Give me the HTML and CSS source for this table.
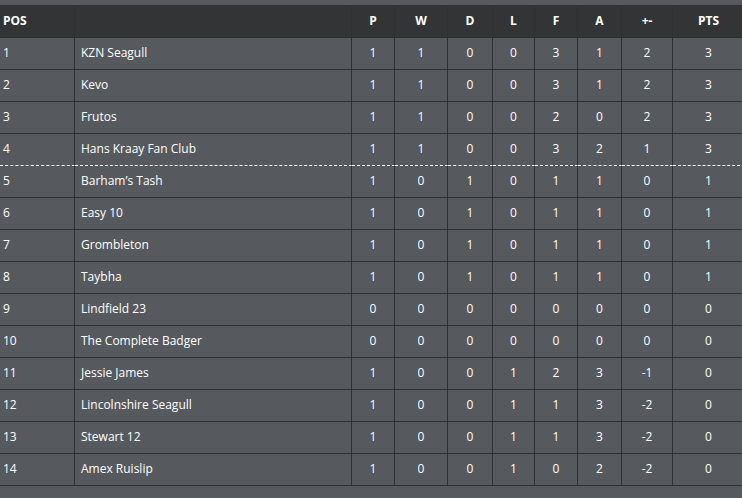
FILE: index.html
```html
<!DOCTYPE html>
<html>
<head>
<meta charset="utf-8">
<link rel="stylesheet" href="styles.css">
</head>
<body>
<table class="league">
  <colgroup>
    <col class="c-pos"><col class="c-team"><col class="c-p"><col class="c-w"><col class="c-d"><col class="c-l"><col class="c-f"><col class="c-a"><col class="c-gd"><col class="c-pts">
  </colgroup>
  <thead>
    <tr><th class="left">POS</th><th></th><th>P</th><th>W</th><th>D</th><th>L</th><th>F</th><th>A</th><th>+-</th><th>PTS</th></tr>
  </thead>
  <tbody>
    <tr><td class="pos">1</td><td class="team">KZN Seagull</td><td>1</td><td>1</td><td>0</td><td>0</td><td>3</td><td>1</td><td>2</td><td>3</td></tr>
    <tr><td class="pos">2</td><td class="team">Kevo</td><td>1</td><td>1</td><td>0</td><td>0</td><td>3</td><td>1</td><td>2</td><td>3</td></tr>
    <tr><td class="pos">3</td><td class="team">Frutos</td><td>1</td><td>1</td><td>0</td><td>0</td><td>2</td><td>0</td><td>2</td><td>3</td></tr>
    <tr class="cutoff"><td class="pos">4</td><td class="team">Hans Kraay Fan Club</td><td>1</td><td>1</td><td>0</td><td>0</td><td>3</td><td>2</td><td>1</td><td>3</td></tr>
    <tr><td class="pos">5</td><td class="team">Barham’s Tash</td><td>1</td><td>0</td><td>1</td><td>0</td><td>1</td><td>1</td><td>0</td><td>1</td></tr>
    <tr><td class="pos">6</td><td class="team">Easy 10</td><td>1</td><td>0</td><td>1</td><td>0</td><td>1</td><td>1</td><td>0</td><td>1</td></tr>
    <tr><td class="pos">7</td><td class="team">Grombleton</td><td>1</td><td>0</td><td>1</td><td>0</td><td>1</td><td>1</td><td>0</td><td>1</td></tr>
    <tr><td class="pos">8</td><td class="team">Taybha</td><td>1</td><td>0</td><td>1</td><td>0</td><td>1</td><td>1</td><td>0</td><td>1</td></tr>
    <tr><td class="pos">9</td><td class="team">Lindfield 23</td><td>0</td><td>0</td><td>0</td><td>0</td><td>0</td><td>0</td><td>0</td><td>0</td></tr>
    <tr><td class="pos">10</td><td class="team">The Complete Badger</td><td>0</td><td>0</td><td>0</td><td>0</td><td>0</td><td>0</td><td>0</td><td>0</td></tr>
    <tr><td class="pos">11</td><td class="team">Jessie James</td><td>1</td><td>0</td><td>0</td><td>1</td><td>2</td><td>3</td><td>-1</td><td>0</td></tr>
    <tr><td class="pos">12</td><td class="team">Lincolnshire Seagull</td><td>1</td><td>0</td><td>0</td><td>1</td><td>1</td><td>3</td><td>-2</td><td>0</td></tr>
    <tr><td class="pos">13</td><td class="team">Stewart 12</td><td>1</td><td>0</td><td>0</td><td>1</td><td>1</td><td>3</td><td>-2</td><td>0</td></tr>
    <tr><td class="pos">14</td><td class="team">Amex Ruislip</td><td>1</td><td>0</td><td>0</td><td>1</td><td>0</td><td>2</td><td>-2</td><td>0</td></tr>
  </tbody>
</table>
</body>
</html>
```
FILE: styles.css
```css
html, body {
  margin: 0;
  padding: 0;
  background: #56595d;
  overflow: hidden;
}
body {
  font-family: "Open Sans", "Noto Sans", sans-serif;
  font-size: 12px;
  color: #ffffff;
}
.league {
  border-collapse: separate;
  border-spacing: 0;
  table-layout: fixed;
  width: 745px;
  margin: 5px 0 0 0;
  border-top: 1px solid #2f3032;
}
.c-pos { width: 75px; }
.c-team { width: 277px; }
.c-p { width: 43px; }
.c-w { width: 53px; }
.c-d { width: 45px; }
.c-l { width: 42px; }
.c-f { width: 43px; }
.c-a { width: 44px; }
.c-gd { width: 51px; }
.c-pts { width: 72px; }
.league th, .league td {
  border-right: 1px solid #2f3032;
  border-bottom: 1px solid #2f3032;
  height: 32px;
  padding: 0 0 2px 0;
  text-align: center;
  box-sizing: border-box;
  white-space: nowrap;
}
.league th {
  background: #333436;
  font-weight: 700;
  font-size: 12px;
}
.league th.left { text-align: left; padding-left: 3px; }
.league td.pos { text-align: left; padding-left: 3px; }
.league td.team { text-align: left; padding-left: 6px; }
.league tr.cutoff td { border-bottom: 1px dashed #ffffff; }
```
